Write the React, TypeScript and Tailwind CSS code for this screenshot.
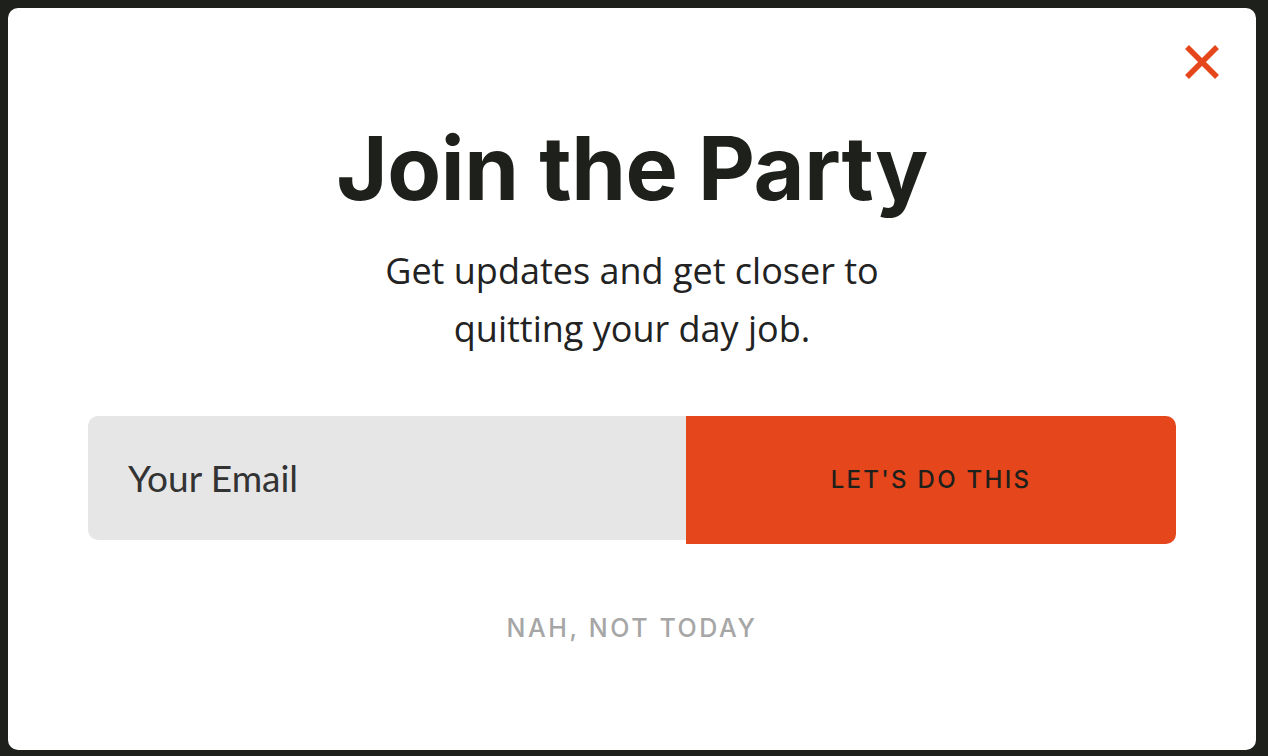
import React from 'react';

export default function App() {
  return (
    <div className="w-[1268px] h-[756px] bg-[#1d201b] pt-2 pl-2">
      <div className="relative w-[1248px] h-[742px] bg-white rounded-[10px] flex flex-col items-center">
        <button className="absolute top-[35px] right-[35px] w-[38px] h-[38px] flex items-center justify-center">
          <svg width="34" height="34" viewBox="0 0 34 34">
            <path d="M2 2 L32 32 M32 2 L2 32" stroke="#e5461c" strokeWidth="5.5" strokeLinecap="butt" />
          </svg>
        </button>

        <h1 className="mt-[108px] text-[88px] leading-[104px] font-bold text-[#1d201b] tracking-[-0.4px] font-['Inter',sans-serif]">
          Join the Party
        </h1>

        <p className="mt-[22px] text-[36px] leading-[58px] text-[#222] text-center font-['Open_Sans',sans-serif]">
          Get updates and get closer to
          <br />
          quitting your day job.
        </p>

        <div className="mt-[58px] w-[1088px] flex items-start">
          <div className="flex-1 h-[124px] bg-[#e6e6e6] rounded-l-[10px] flex items-center pl-10">
            <span className="text-[37px] text-[#333] font-['Lato',sans-serif]">Your Email</span>
          </div>
          <button className="w-[490px] h-[128px] bg-[#e5461c] rounded-[10px] rounded-l-none flex items-center justify-center">
            <span className="text-[24px] font-medium tracking-[2.3px] text-[#1d201b] font-['Inter',sans-serif]">
              LET'S DO THIS
            </span>
          </button>
        </div>

        <button className="mt-[66px] text-[25px] font-medium tracking-[2.6px] text-[#a6a6a6] font-['Inter',sans-serif]">
          NAH, NOT TODAY
        </button>
      </div>
    </div>
  );
}
